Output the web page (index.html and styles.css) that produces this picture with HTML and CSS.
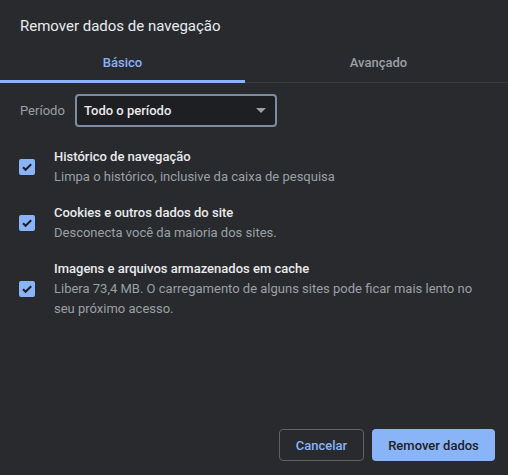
FILE: index.html
```html
<!DOCTYPE html>
<html lang="pt-BR">
<head>
<meta charset="utf-8">
<title>Remover dados de navegação</title>
<link rel="stylesheet" href="styles.css">
</head>
<body>
<div class="dialog">
  <div class="title">Remover dados de navegação</div>
  <div class="tabs">
    <div class="tab tab-active">Básico</div>
    <div class="tab tab-other">Avançado</div>
  </div>
  <div class="period">
    <span class="period-label">Período</span>
    <div class="select">
      <span class="select-text">Todo o período</span>
      <span class="arrow"></span>
    </div>
  </div>
  <div class="items">
    <div class="item">
      <div class="checkbox"><svg viewBox="0 0 16 16" width="16" height="16"><path d="M4 8.2l2.6 2.6L12.2 5.2" fill="none" stroke="#202124" stroke-width="2"/></svg></div>
      <div class="item-text">
        <div class="item-title">Histórico de navegação</div>
        <div class="item-sub">Limpa o histórico, inclusive da caixa de pesquisa</div>
      </div>
    </div>
    <div class="item">
      <div class="checkbox"><svg viewBox="0 0 16 16" width="16" height="16"><path d="M4 8.2l2.6 2.6L12.2 5.2" fill="none" stroke="#202124" stroke-width="2"/></svg></div>
      <div class="item-text">
        <div class="item-title">Cookies e outros dados do site</div>
        <div class="item-sub">Desconecta você da maioria dos sites.</div>
      </div>
    </div>
    <div class="item">
      <div class="checkbox"><svg viewBox="0 0 16 16" width="16" height="16"><path d="M4 8.2l2.6 2.6L12.2 5.2" fill="none" stroke="#202124" stroke-width="2"/></svg></div>
      <div class="item-text">
        <div class="item-title">Imagens e arquivos armazenados em cache</div>
        <div class="item-sub">Libera 73,4 MB. O carregamento de alguns sites pode ficar mais lento no seu próximo acesso.</div>
      </div>
    </div>
  </div>
  <div class="buttons">
    <button class="btn btn-cancel">Cancelar</button>
    <button class="btn btn-primary">Remover dados</button>
  </div>
</div>
</body>
</html>
```

FILE: styles.css
```css
html, body {
  margin: 0;
  padding: 0;
  background: #292a2d;
}
body {
  font-family: Roboto, "Liberation Sans", sans-serif;
  color: #e8eaed;
}
.dialog {
  width: 508px;
  height: 475px;
  display: flex;
  flex-direction: column;
  box-sizing: border-box;
  background: #292a2d;
}
.title {
  font-size: 15px;
  line-height: 20px;
  padding: 16px 20px 0;
  color: #e8eaed;
}
.tabs {
  display: flex;
  margin-top: 9px;
  border-bottom: 1px solid #3c3d40;
}
.tab {
  font-size: 13px;
  font-weight: 500;
  height: 35px;
  line-height: 35px;
  text-align: center;
  box-sizing: border-box;
}
.tab-active {
  width: 245px;
  color: #8ab4f8;
  border-bottom: 3px solid #8ab4f8;
  margin-bottom: -1px;
  height: 38px;
}
.tab-other {
  flex: 1;
  padding-left: 4px;
  color: #9aa0a6;
}
.period {
  display: flex;
  align-items: center;
  padding: 11px 20px 0;
}
.period-label {
  font-size: 13px;
  color: #9aa0a6;
  width: 55px;
}
.select {
  width: 202px;
  height: 33px;
  box-sizing: border-box;
  border: 2px solid #7d8ba3;
  border-radius: 4px;
  background: #1e1f22;
  display: flex;
  align-items: center;
  justify-content: space-between;
  padding: 0 8px 0 7px;
}
.select-text {
  font-size: 13px;
  font-weight: 500;
  color: #e8eaed;
}
.arrow {
  width: 0;
  height: 0;
  border-left: 5px solid transparent;
  border-right: 5px solid transparent;
  border-top: 5px solid #9aa0a6;
  margin-right: 1px;
}
.items {
  display: flex;
  flex-direction: column;
  gap: 16px;
  padding: 20px 20px 0 19px;
}
.item {
  display: flex;
  align-items: center;
  gap: 19px;
}
.checkbox {
  width: 16px;
  height: 16px;
  border-radius: 2px;
  background: #8ab4f8;
  flex: none;
  display: flex;
}
.item-text {
  font-size: 13px;
  line-height: 20px;
}
.item-title {
  color: #e8eaed;
  font-weight: 500;
}
.item-sub {
  color: #9aa0a6;
}
.buttons {
  margin-top: auto;
  display: flex;
  justify-content: flex-end;
  gap: 8px;
  padding: 0 13px 14px 0;
}
.btn {
  font-family: Roboto, "Liberation Sans", sans-serif;
  font-size: 13px;
  font-weight: 500;
  height: 32px;
  border-radius: 4px;
  box-sizing: border-box;
  cursor: pointer;
}
.btn-cancel {
  width: 85px;
  background: transparent;
  border: 1px solid #5f6368;
  color: #8ab4f8;
}
.btn-primary {
  width: 123px;
  background: #8ab4f8;
  border: none;
  color: #202124;
}
```
